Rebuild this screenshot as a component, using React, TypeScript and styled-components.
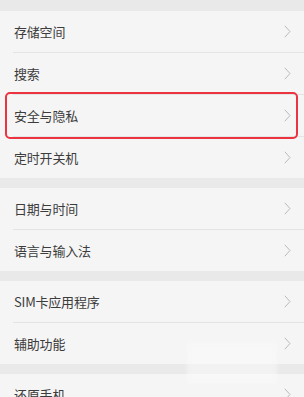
import styled, { createGlobalStyle } from 'styled-components'

const GlobalStyle = createGlobalStyle`
  html, body {
    margin: 0;
    padding: 0;
    background: #e9e9e9;
  }
  body {
    font-family: "Noto Sans CJK SC", "Liberation Sans", sans-serif;
  }
`

const Page = styled.div`
  position: relative;
  width: 304px;
  height: 397px;
  overflow: hidden;
  background: #e9e9e9;
  padding-top: 11px;
  box-sizing: border-box;
  display: flex;
  flex-direction: column;
  gap: 10px;
`

const Section = styled.div`
  display: flex;
  flex-direction: column;
  background: #f5f5f5;
`

const Divider = styled.div`
  height: 1px;
  margin-left: 13px;
  background: #e4e4e4;
`

const ItemRow = styled.div`
  position: relative;
  display: flex;
  align-items: center;
  justify-content: space-between;
  height: 41px;
  padding: 0 13px 0 14px;
  font-size: 13px;
  color: #3c3c3c;
`

const Label = styled.span`
  letter-spacing: -0.2px;
`

const Highlight = styled.div`
  position: absolute;
  left: 5px;
  right: 6px;
  top: -3px;
  bottom: -3px;
  border: 2px solid #ec3340;
  border-radius: 5px;
  pointer-events: none;
`

const Smudge = styled.div`
  position: absolute;
  left: 187px;
  top: 342px;
  width: 90px;
  height: 42px;
  background: rgba(250, 250, 250, 0.55);
  filter: blur(2px);
  pointer-events: none;
`

const Chevron = () => (
  <svg width="7" height="13" viewBox="0 0 7 13">
    <path d="M0.8 0.8 L6 6.5 L0.8 12.2" fill="none" stroke="#b9b9b9" strokeWidth="1" />
  </svg>
)

const sections: { label: string; highlight?: boolean }[][] = [
  [
    { label: '存储空间' },
    { label: '搜索' },
    { label: '安全与隐私', highlight: true },
    { label: '定时开关机' },
  ],
  [{ label: '日期与时间' }, { label: '语言与输入法' }],
  [{ label: 'SIM卡应用程序' }, { label: '辅助功能' }],
  [{ label: '还原手机' }],
]

const Item = ({ label, highlight }: { label: string; highlight?: boolean }) => (
  <ItemRow>
    <Label>{label}</Label>
    <Chevron />
    {highlight && <Highlight />}
  </ItemRow>
)

export default function App() {
  return (
    <>
      <GlobalStyle />
      <Page>
        {sections.map((items, si) => (
          <Section key={si}>
            {items.map((item, i) => (
              <div key={item.label}>
                {i > 0 && <Divider />}
                <Item label={item.label} highlight={item.highlight} />
              </div>
            ))}
          </Section>
        ))}
        <Smudge />
      </Page>
    </>
  )
}
